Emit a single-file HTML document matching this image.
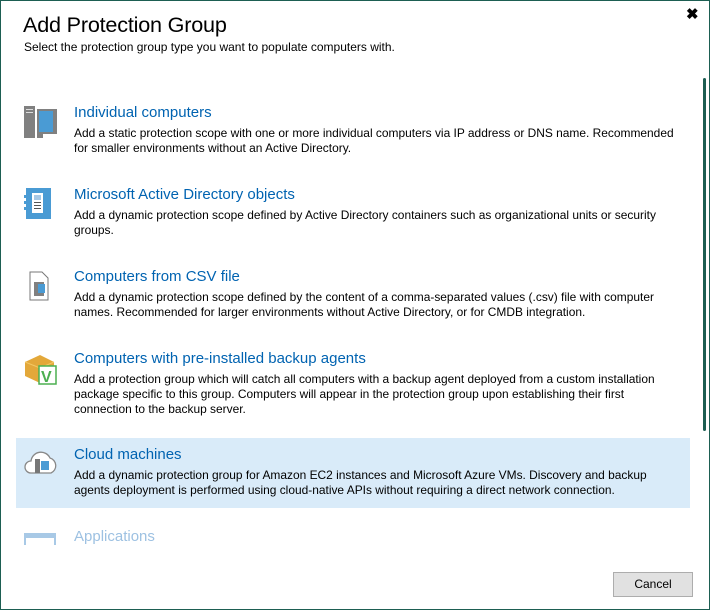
<!DOCTYPE html>
<html><head><style>
body{margin:0;width:710px;height:610px;background:#fff;font-family:"Liberation Sans",sans-serif;overflow:hidden;position:relative}
.frame{position:absolute;left:0;top:0;width:708px;height:608px;border:1px solid #1d5e52}
.t{position:absolute;white-space:nowrap}
h1{position:absolute;left:23px;top:12px;margin:0;font-weight:normal;font-size:21.6px;color:#000;letter-spacing:-0.2px}
.sub{left:24px;top:40px;font-size:12px;color:#000}
.it{position:absolute;left:74px;width:620px}
.it .h{font-size:15px;color:#0063b1;margin-bottom:5px;white-space:nowrap}
.it .d{font-size:11.95px;line-height:15px;color:#000;white-space:nowrap}
.ic{position:absolute;left:24px}
.sel{position:absolute;left:16px;top:438px;width:674px;height:70px;background:#d9ebf9}
.scroll{position:absolute;left:703px;top:78px;width:3px;height:353px;background:#1d5e52;border-radius:2px}
.btn{position:absolute;left:613px;top:572px;width:78px;height:23px;border:1px solid #adadad;background:#e1e1e1;font-size:12px;text-align:center;line-height:23px}
.x{position:absolute;left:686px;top:5px;font-size:15px;font-weight:bold}
</style></head><body>
<div class="frame"></div>
<div class="x">✖</div>
<h1>Add Protection Group</h1>
<div class="t sub">Select the protection group type you want to populate computers with.</div>
<div class="scroll"></div>
<div class="sel"></div>

<svg class="ic" style="top:106px" width="34" height="33"><rect x="0" y="0" width="11" height="32" fill="#808080"/><rect x="2" y="3" width="7" height="1" fill="#ddd"/><rect x="2" y="6" width="7" height="1" fill="#ddd"/><rect x="13" y="3" width="20" height="25" fill="#808080"/><rect x="15" y="5" width="14" height="21" fill="#4a9bd4"/><rect x="13" y="28" width="6" height="4" fill="#808080"/></svg>
<div class="it" style="top:104px"><div class="h">Individual computers</div><div class="d">Add a static protection scope with one or more individual computers via IP address or DNS name. Recommended<br>for smaller environments without an Active Directory.</div></div>

<svg class="ic" style="top:188px" width="30" height="32"><rect x="2" y="0" width="25" height="31" fill="#4a9bd4"/><rect x="0" y="7" width="3" height="3" fill="#4a9bd4"/><rect x="0" y="13" width="3" height="3" fill="#4a9bd4"/><rect x="0" y="19" width="3" height="3" fill="#4a9bd4"/><rect x="8" y="5" width="11" height="20" fill="#fff"/><rect x="10" y="7" width="7" height="5" fill="#a8c9e6"/><rect x="10" y="14" width="7" height="1" fill="#555"/><rect x="10" y="17" width="7" height="1" fill="#555"/><rect x="10" y="20" width="7" height="1" fill="#555"/></svg>
<div class="it" style="top:186px"><div class="h">Microsoft Active Directory objects</div><div class="d">Add a dynamic protection scope defined by Active Directory containers such as organizational units or security<br>groups.</div></div>

<svg class="ic" style="top:270px" width="30" height="32"><path d="M6 2h12l6 6v22H6z" fill="#fff" stroke="#777"/><rect x="10" y="12" width="10" height="14" fill="#808080"/><rect x="14" y="14" width="7" height="9" fill="#4a9bd4"/></svg>
<div class="it" style="top:268px"><div class="h">Computers from CSV file</div><div class="d">Add a dynamic protection scope defined by the content of a comma-separated values (.csv) file with computer<br>names. Recommended for larger environments without Active Directory, or for CMDB integration.</div></div>

<svg class="ic" style="top:352px" width="34" height="34"><path d="M1 10L16 3l14 7v14l-14 7L1 24z" fill="#e3a83a"/><path d="M1 10l15 6 14-6" fill="none" stroke="#f3c866"/><rect x="15" y="14" width="17" height="18" fill="#fff" stroke="#4caf50" stroke-width="1.5"/><text x="17" y="30" font-size="16" font-weight="bold" fill="#4caf50" font-family="Liberation Sans">V</text></svg>
<div class="it" style="top:350px"><div class="h">Computers with pre-installed backup agents</div><div class="d">Add a protection group which will catch all computers with a backup agent deployed from a custom installation<br>package specific to this group. Computers will appear in the protection group upon establishing their first<br>connection to the backup server.</div></div>

<svg class="ic" style="top:449px" width="34" height="28"><path d="M7 24a6 6 0 0 1 0-12a10 10 0 0 1 19-3a8 8 0 0 1 1 15z" fill="#fff" stroke="#888" stroke-width="1.3"/><rect x="11" y="10" width="5" height="14" fill="#777"/><rect x="17" y="12" width="8" height="9" fill="#4a9bd4"/></svg>
<div class="it" style="top:446px"><div class="h">Cloud machines</div><div class="d">Add a dynamic protection group for Amazon EC2 instances and Microsoft Azure VMs. Discovery and backup<br>agents deployment is performed using cloud-native APIs without requiring a direct network connection.</div></div>

<svg class="ic" style="top:533px" width="34" height="12"><rect x="0" y="0" width="32" height="12" fill="#a8c9e6"/><rect x="2" y="5" width="28" height="7" fill="#fff"/></svg>
<div class="it" style="top:528px"><div class="h" style="color:#9dc1e2">Applications</div></div>

<div class="btn">Cancel</div>
</body></html>
